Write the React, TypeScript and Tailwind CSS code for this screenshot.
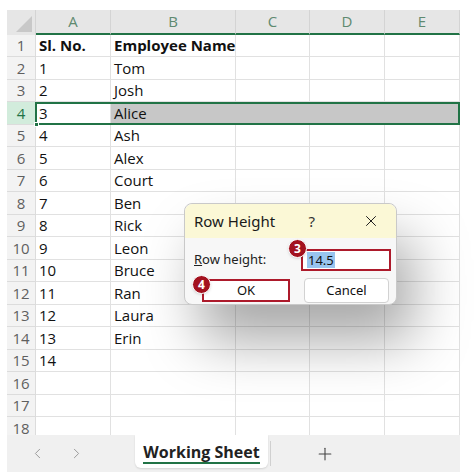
import React from "react";
import { X, ChevronLeft, ChevronRight, Plus } from "lucide-react";

const rows: [string, string][] = [
  ["Sl. No.", "Employee Name"],
  ["1", "Tom"],
  ["2", "Josh"],
  ["3", "Alice"],
  ["4", "Ash"],
  ["5", "Alex"],
  ["6", "Court"],
  ["7", "Ben"],
  ["8", "Rick"],
  ["9", "Leon"],
  ["10", "Bruce"],
  ["11", "Ran"],
  ["12", "Laura"],
  ["13", "Erin"],
  ["14", ""],
  ["", ""],
  ["", ""],
  ["", ""],
];

const cols = [
  { name: "A", w: "w-[75px]" },
  { name: "B", w: "w-[125px]" },
  { name: "C", w: "w-[74px]" },
  { name: "D", w: "w-[75px]" },
  { name: "E", w: "w-[75px]" },
];

const Badge = ({ n }: { n: string }) => (
  <div className="absolute w-[19px] h-[19px] rounded-full bg-[#a3121f] border border-white text-white text-[12px] font-bold flex items-center justify-center leading-none shadow-sm">
    {n}
  </div>
);

export default function App() {
  return (
    <div
      className="w-[474px] h-[475px] bg-white overflow-hidden relative pt-[10px] pl-[7px]"
      style={{ fontFamily: '"Open Sans", "Noto Sans", sans-serif' }}
    >
      <div className="w-[453px] flex flex-col">
        {/* sheet grid */}
        <div className="h-[425px] overflow-hidden relative">
          <div className="flex h-[24.5px] bg-[#e6e6e6]">
            <div className="w-[29px] relative border-r border-[#d4d4d4]">
              <div className="absolute right-[3px] bottom-[3px] w-0 h-0 border-l-[16px] border-l-transparent border-b-[16px] border-b-[#c8c8c8]" />
            </div>
            {cols.map((c) => (
              <div
                key={c.name}
                className={`${c.w} flex items-center justify-center text-[15px] text-[#5f8a70] border-r border-[#d4d4d4] border-b-2 border-b-[#217346]`}
              >
                {c.name}
              </div>
            ))}
          </div>

          {rows.map(([a, b], i) => {
            const sel = i === 3;
            const bold = i === 0;
            return (
              <div key={i} className="flex h-[22.5px]">
                <div
                  className={`w-[29px] flex items-center justify-center text-[15px] border-r border-b border-[#dcdcdc] ${
                    sel ? "bg-[#d2ecdc] text-[#217346]" : "bg-[#f3f3f3] text-[#5f5f5f]"
                  }`}
                >
                  {i + 1}
                </div>
                {cols.map((c, ci) => (
                  <div
                    key={c.name}
                    className={`${c.w} flex items-center px-[3px] text-[15px] text-[#111] border-r border-b border-[#e1e1e1] whitespace-nowrap ${
                      sel && ci > 0 ? "bg-[#c7c7c7] border-r-[#c7c7c7]" : "bg-white"
                    } ${bold ? "font-bold" : ""}`}
                  >
                    {ci === 0 ? a : ci === 1 ? b : ""}
                  </div>
                ))}
              </div>
            );
          })}

          {/* selection outline for row 4 */}
          <div className="absolute left-[28px] top-[91.5px] w-[425px] h-[23.5px] border-2 border-[#217346] pointer-events-none" />
          <div className="absolute left-[27px] top-[112px] w-[5px] h-[5px] bg-[#217346] border border-white" />
        </div>

        {/* sheet tabs */}
        <div className="h-[37px] bg-[#f0f0f0] flex items-stretch">
          <div className="w-[128px] flex items-center pl-[22px] gap-[22px] text-[#9a9a9a]">
            <ChevronLeft size={17} strokeWidth={1.4} />
            <ChevronRight size={17} strokeWidth={1.4} />
          </div>
          <div className="w-[133px] bg-white rounded-b-[6px] flex items-center justify-center shadow-[0_1px_2px_rgba(0,0,0,0.12)] mb-[4px]">
            <span className="text-[16px] font-bold text-[#222] border-b-2 border-[#217346] leading-[20px] pt-[2px]">
              Working Sheet
            </span>
          </div>
          <div className="w-[1px] bg-[#d0d0d0] my-[6px] ml-[2px]" />
          <div className="flex-1 flex items-center pl-[44px] text-[#444]">
            <Plus size={20} strokeWidth={1.3} />
          </div>
        </div>
      </div>

      {/* Row Height dialog */}
      <div
        className="absolute left-[184px] top-[203px] w-[213px] h-[102px] rounded-[8px] border border-[#c9c9c9] bg-[#f7f7f7] shadow-[16px_36px_55px_rgba(0,0,0,0.34)]"
        style={{ fontFamily: '"Noto Sans", "Open Sans", sans-serif' }}
      >
        <div className="h-[34px] bg-[#fbf8d6] rounded-t-[8px] flex items-center pl-[9px] pr-[16px] text-[#1a1a1a]">
          <span className="text-[15px]">Row Height</span>
          <span className="ml-auto mr-[47px] text-[15px] text-[#333]">?</span>
          <X size={18} strokeWidth={1.3} />
        </div>
        <div className="relative h-[67px]">
          <div className="absolute left-[9px] top-[12px] text-[13px] text-[#222]">
            <span className="underline">R</span>ow height:
          </div>
          <div className="absolute left-[116px] top-[11px] w-[90px] h-[22px] border-2 border-[#ad1a2b] bg-white flex items-center pl-[4px]">
            <span className="bg-[#99c5ef] text-[13px] text-[#111] leading-[16px] px-[1px]">14.5</span>
          </div>
          <div className="absolute left-[17px] top-[41px] w-[88px] h-[23px] border-2 border-[#ad1a2b] bg-white flex items-center justify-center text-[13px] text-[#111]">
            OK
          </div>
          <div className="absolute left-[119px] top-[40px] w-[85px] h-[25px] border border-[#d2d2d2] rounded-[4px] bg-white flex items-center justify-center text-[13px] text-[#111]">
            Cancel
          </div>
          <div className="absolute left-[103px] top-[1px]">
            <Badge n="3" />
          </div>
          <div className="absolute left-[7px] top-[37px]">
            <Badge n="4" />
          </div>
        </div>
      </div>
    </div>
  );
}
